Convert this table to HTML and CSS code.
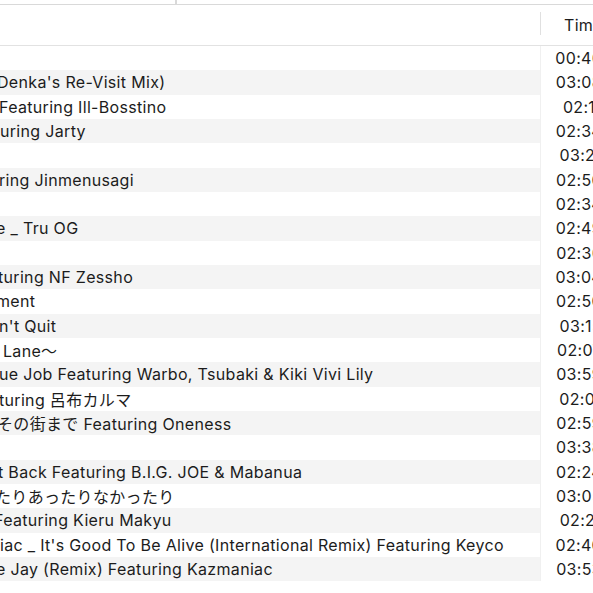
FILE: index.html
```html
<!DOCTYPE html>
<html>
<head>
<meta charset="utf-8">
<link rel="stylesheet" href="styles.css">
</head>
<body>
<div class="window">
  <div class="topbar">
    <div class="seg seg-left"></div>
    <div class="seg seg-right"></div>
  </div>
  <div class="thead">
    <div class="th th-title"></div>
    <div class="th th-time"><span class="th-label">Time</span></div>
  </div>
  <div class="tbody">
    <div class="row"><div class="title"></div><div class="time">00:46</div></div>
    <div class="row"><div class="title" style="margin-left:-3px">Denka's Re-Visit Mix)</div><div class="time">03:08</div></div>
    <div class="row"><div class="title" style="margin-left:-1px">Featuring Ill-Bosstino</div><div class="time">02:11</div></div>
    <div class="row"><div class="title" style="margin-left:0px">uring Jarty</div><div class="time">02:34</div></div>
    <div class="row"><div class="title"></div><div class="time">03:21</div></div>
    <div class="row"><div class="title" style="margin-left:-1px">ring Jinmenusagi</div><div class="time">02:50</div></div>
    <div class="row"><div class="title"></div><div class="time">02:34</div></div>
    <div class="row"><div class="title" style="margin-left:-4px">e _ Tru OG</div><div class="time">02:49</div></div>
    <div class="row"><div class="title"></div><div class="time">02:36</div></div>
    <div class="row"><div class="title" style="margin-left:-2px">turing NF Zessho</div><div class="time">03:04</div></div>
    <div class="row"><div class="title" style="margin-left:-4px">ment</div><div class="time">02:50</div></div>
    <div class="row"><div class="title" style="margin-left:-1px">n't Quit</div><div class="time">03:15</div></div>
    <div class="row"><div class="title" style="margin-left:3px">Lane～</div><div class="time">02:07</div></div>
    <div class="row"><div class="title" style="margin-left:-1px">ue Job Featuring Warbo, Tsubaki &amp; Kiki Vivi Lily</div><div class="time">03:59</div></div>
    <div class="row"><div class="title" style="margin-left:-1px">turing 呂布カルマ</div><div class="time">02:01</div></div>
    <div class="row"><div class="title" style="margin-left:-3px">その街まで Featuring Oneness</div><div class="time">02:59</div></div>
    <div class="row"><div class="title"></div><div class="time">03:38</div></div>
    <div class="row"><div class="title" style="margin-left:-2px">t Back Featuring B.I.G. JOE &amp; Mabanua</div><div class="time">02:24</div></div>
    <div class="row"><div class="title" style="margin-left:-5px">たりあったりなかったり</div><div class="time">03:05</div></div>
    <div class="row"><div class="title" style="margin-left:-6px">Featuring Kieru Makyu</div><div class="time">02:21</div></div>
    <div class="row"><div class="title" style="margin-left:0px">iac _ It's Good To Be Alive (International Remix) Featuring Keyco</div><div class="time">02:40</div></div>
    <div class="row"><div class="title" style="margin-left:-4px">e Jay (Remix) Featuring Kazmaniac</div><div class="time">03:53</div></div>
  </div>
</div>
</body>
</html>
```

FILE: styles.css
```css
html, body {
  margin: 0;
  padding: 0;
  background: #ffffff;
  overflow: hidden;
}

.window {
  width: 593px;
  height: 593px;
  overflow: hidden;
  font-family: Inter, "Noto Sans CJK JP", sans-serif;
  font-size: 16px;
  letter-spacing: 0.32px;
  color: #1c1c1c;
  background: #ffffff;
}

.topbar {
  display: flex;
  height: 4px;
  border-bottom: 1px solid #d9d9d9;
}

.seg-left {
  width: 175px;
  border-right: 2px solid #d9d9d9;
}

.seg-right {
  flex: 1;
}

.thead {
  display: grid;
  grid-template-columns: 540px 70px;
  height: 40px;
  border-bottom: 1px solid #e2e2e2;
}

.th {
  display: flex;
  align-items: center;
}

.th-time {
  border-left: 1px solid #e0e0e0;
  margin: 7px 0 10px;
  padding-left: 23px;
}

.th-label {
  margin-top: 2px;
}

.tbody {
  display: flex;
  flex-direction: column;
}

.row {
  display: grid;
  grid-template-columns: 540px 70px;
  height: 24.33px;
  align-items: center;
  white-space: nowrap;
}

.row:nth-child(even) .title {
  background: #f4f4f4;
}

.title {
  height: 100%;
  display: flex;
  align-items: center;
  overflow: visible;
}

.time {
  height: 100%;
  display: flex;
  align-items: center;
  justify-content: flex-end;
  padding-right: 8px;
  border-left: 1px solid #f0f0f0;
}
```
